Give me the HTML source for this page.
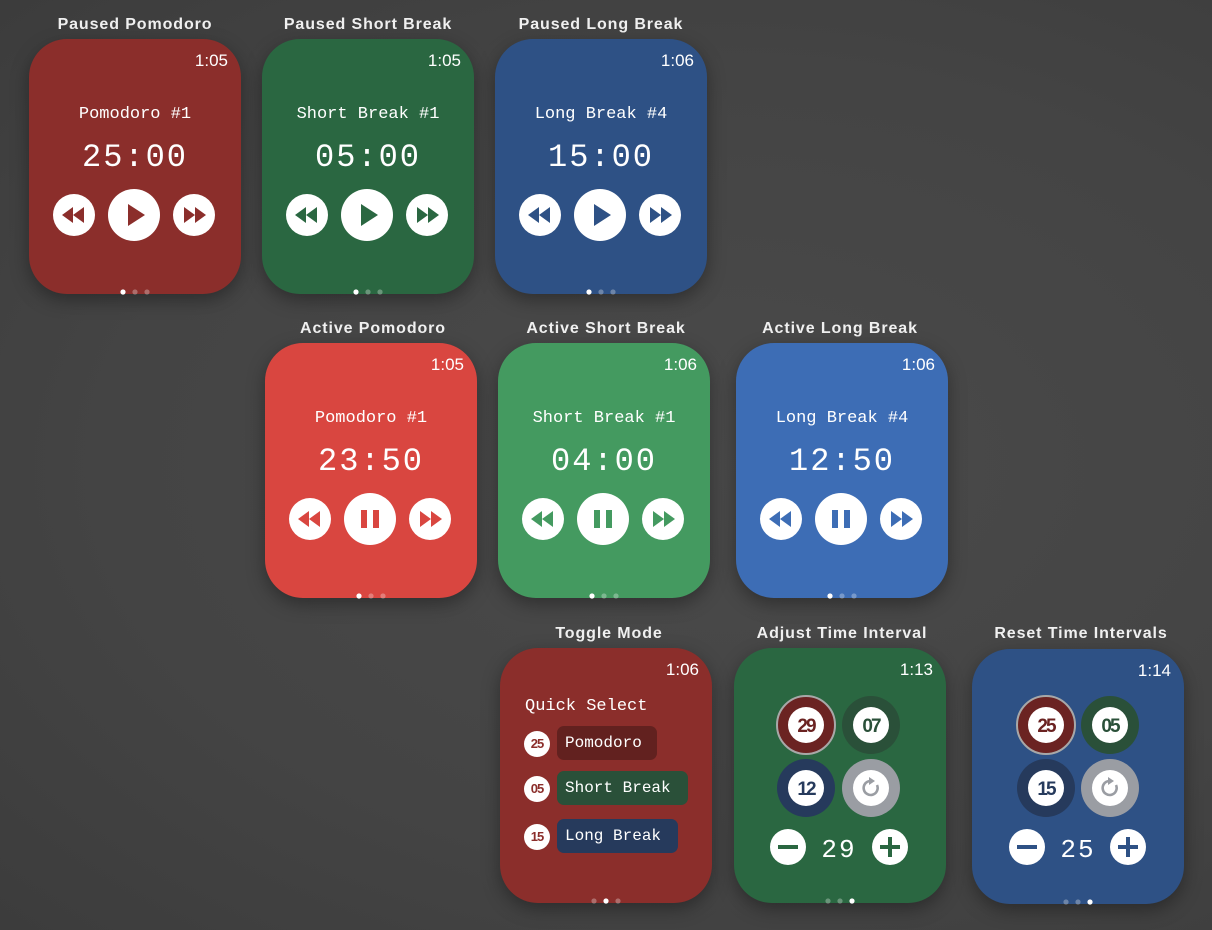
<!DOCTYPE html>
<html><head><meta charset="utf-8"><style>
*{margin:0;padding:0;box-sizing:border-box}
body{width:1212px;height:930px;background:radial-gradient(ellipse at 60% 50%,#4a4a4a 0%,#444 60%,#3c3c3c 100%);position:relative;overflow:hidden;font-family:"Liberation Sans",sans-serif}
.h{position:absolute;color:#f0f0f0;font-weight:bold;font-size:16px;text-align:center;width:240px;letter-spacing:0.9px}
.w{position:absolute;width:212px;height:255px;border-radius:38px;box-shadow:0 6px 18px rgba(0,0,0,.35)}
.t{position:absolute;right:13px;top:12px;color:#fff;font-size:17px}
.l{position:absolute;top:66px;width:100%;text-align:center;color:#fff;font-family:"Liberation Mono",monospace;font-size:17px}
.m{position:absolute;top:100px;width:100%;text-align:center;color:#fff;font-family:"Liberation Mono",monospace;font-size:32px;letter-spacing:2px}
.b{position:absolute;left:0;top:146px}
.d{position:absolute;left:0;bottom:-3px}
.qs{position:absolute;left:25px;top:49px;color:#fff;font-family:"Liberation Mono",monospace;font-size:17px}
.r{position:absolute;left:24px;height:34px}
.r .c{position:absolute;left:0;top:5px;width:26px;height:26px;border-radius:50%;background:#fff;color:#8b2e2b;font-weight:bold;font-size:13px;text-align:center;line-height:26px;letter-spacing:-1px}
.r .p{position:absolute;left:33px;top:0;height:34px;border-radius:7px;color:#fff;font-family:"Liberation Mono",monospace;font-size:16px;line-height:34px;padding:0 8px;white-space:nowrap}
</style></head><body>

<div class="h" style="left:15px;top:16px">Paused Pomodoro</div>
<div class="h" style="left:248px;top:16px">Paused Short Break</div>
<div class="h" style="left:481px;top:16px">Paused Long Break</div>
<div class="h" style="left:253px;top:320px">Active Pomodoro</div>
<div class="h" style="left:486px;top:320px">Active Short Break</div>
<div class="h" style="left:720px;top:320px">Active Long Break</div>
<div class="h" style="left:489px;top:625px">Toggle Mode</div>
<div class="h" style="left:722px;top:625px">Adjust Time Interval</div>
<div class="h" style="left:961px;top:625px">Reset Time Intervals</div>

<!-- Row 1 -->
<div class="w" style="left:29px;top:39px;background:#8b2e2b">
<div class="t">1:05</div><div class="l">Pomodoro #1</div><div class="m">25:00</div>
<svg class="b" width="212" height="60"><g fill="#fff"><circle cx="45" cy="30" r="21"/><circle cx="105" cy="30" r="26"/><circle cx="165" cy="30" r="21"/></g><g fill="#8b2e2b"><polygon points="33,30 44,22 44,38"/><polygon points="44,30 55,22 55,38"/><polygon points="99,19 116,30 99,41"/><polygon points="155,22 166,30 155,38"/><polygon points="166,22 177,30 166,38"/></g></svg>
<svg class="d" width="212" height="10"><circle cx="94" cy="5" r="2.6" fill="#fff"/><circle cx="106" cy="5" r="2.6" fill="rgba(255,255,255,.3)"/><circle cx="118" cy="5" r="2.6" fill="rgba(255,255,255,.3)"/></svg>
</div>

<div class="w" style="left:262px;top:39px;background:#2a6741">
<div class="t">1:05</div><div class="l">Short Break #1</div><div class="m">05:00</div>
<svg class="b" width="212" height="60"><g fill="#fff"><circle cx="45" cy="30" r="21"/><circle cx="105" cy="30" r="26"/><circle cx="165" cy="30" r="21"/></g><g fill="#2a6741"><polygon points="33,30 44,22 44,38"/><polygon points="44,30 55,22 55,38"/><polygon points="99,19 116,30 99,41"/><polygon points="155,22 166,30 155,38"/><polygon points="166,22 177,30 166,38"/></g></svg>
<svg class="d" width="212" height="10"><circle cx="94" cy="5" r="2.6" fill="#fff"/><circle cx="106" cy="5" r="2.6" fill="rgba(255,255,255,.3)"/><circle cx="118" cy="5" r="2.6" fill="rgba(255,255,255,.3)"/></svg>
</div>

<div class="w" style="left:495px;top:39px;background:#2e5185">
<div class="t">1:06</div><div class="l">Long Break #4</div><div class="m">15:00</div>
<svg class="b" width="212" height="60"><g fill="#fff"><circle cx="45" cy="30" r="21"/><circle cx="105" cy="30" r="26"/><circle cx="165" cy="30" r="21"/></g><g fill="#2e5185"><polygon points="33,30 44,22 44,38"/><polygon points="44,30 55,22 55,38"/><polygon points="99,19 116,30 99,41"/><polygon points="155,22 166,30 155,38"/><polygon points="166,22 177,30 166,38"/></g></svg>
<svg class="d" width="212" height="10"><circle cx="94" cy="5" r="2.6" fill="#fff"/><circle cx="106" cy="5" r="2.6" fill="rgba(255,255,255,.3)"/><circle cx="118" cy="5" r="2.6" fill="rgba(255,255,255,.3)"/></svg>
</div>

<!-- Row 2 -->
<div class="w" style="left:265px;top:343px;background:#d94640">
<div class="t">1:05</div><div class="l">Pomodoro #1</div><div class="m">23:50</div>
<svg class="b" width="212" height="60"><g fill="#fff"><circle cx="45" cy="30" r="21"/><circle cx="105" cy="30" r="26"/><circle cx="165" cy="30" r="21"/></g><g fill="#d94640"><polygon points="33,30 44,22 44,38"/><polygon points="44,30 55,22 55,38"/><rect x="96" y="21" width="6" height="18"/><rect x="108" y="21" width="6" height="18"/><polygon points="155,22 166,30 155,38"/><polygon points="166,22 177,30 166,38"/></g></svg>
<svg class="d" width="212" height="10"><circle cx="94" cy="5" r="2.6" fill="#fff"/><circle cx="106" cy="5" r="2.6" fill="rgba(255,255,255,.3)"/><circle cx="118" cy="5" r="2.6" fill="rgba(255,255,255,.3)"/></svg>
</div>

<div class="w" style="left:498px;top:343px;background:#449a60">
<div class="t">1:06</div><div class="l">Short Break #1</div><div class="m">04:00</div>
<svg class="b" width="212" height="60"><g fill="#fff"><circle cx="45" cy="30" r="21"/><circle cx="105" cy="30" r="26"/><circle cx="165" cy="30" r="21"/></g><g fill="#449a60"><polygon points="33,30 44,22 44,38"/><polygon points="44,30 55,22 55,38"/><rect x="96" y="21" width="6" height="18"/><rect x="108" y="21" width="6" height="18"/><polygon points="155,22 166,30 155,38"/><polygon points="166,22 177,30 166,38"/></g></svg>
<svg class="d" width="212" height="10"><circle cx="94" cy="5" r="2.6" fill="#fff"/><circle cx="106" cy="5" r="2.6" fill="rgba(255,255,255,.3)"/><circle cx="118" cy="5" r="2.6" fill="rgba(255,255,255,.3)"/></svg>
</div>

<div class="w" style="left:736px;top:343px;background:#3d6db5">
<div class="t">1:06</div><div class="l">Long Break #4</div><div class="m">12:50</div>
<svg class="b" width="212" height="60"><g fill="#fff"><circle cx="45" cy="30" r="21"/><circle cx="105" cy="30" r="26"/><circle cx="165" cy="30" r="21"/></g><g fill="#3d6db5"><polygon points="33,30 44,22 44,38"/><polygon points="44,30 55,22 55,38"/><rect x="96" y="21" width="6" height="18"/><rect x="108" y="21" width="6" height="18"/><polygon points="155,22 166,30 155,38"/><polygon points="166,22 177,30 166,38"/></g></svg>
<svg class="d" width="212" height="10"><circle cx="94" cy="5" r="2.6" fill="#fff"/><circle cx="106" cy="5" r="2.6" fill="rgba(255,255,255,.3)"/><circle cx="118" cy="5" r="2.6" fill="rgba(255,255,255,.3)"/></svg>
</div>

<!-- Row 3 -->
<div class="w" style="left:500px;top:648px;background:#8b2e2b">
<div class="t">1:06</div>
<div class="qs">Quick Select</div>
<div class="r" style="top:78px"><div class="c">25</div><div class="p" style="background:#62211f;width:100px">Pomodoro</div></div>
<div class="r" style="top:123px"><div class="c">05</div><div class="p" style="background:#2a5039;width:131px">Short Break</div></div>
<div class="r" style="top:171px"><div class="c">15</div><div class="p" style="background:#263a5c;width:121px">Long Break</div></div>
<svg class="d" width="212" height="10"><circle cx="94" cy="5" r="2.6" fill="rgba(255,255,255,.3)"/><circle cx="106" cy="5" r="2.6" fill="#fff"/><circle cx="118" cy="5" r="2.6" fill="rgba(255,255,255,.3)"/></svg>
</div>

<div class="w" style="left:734px;top:648px;background:#2a6741">
<div class="t">1:13</div>
<svg style="position:absolute;left:0;top:0" width="212" height="255" font-family="Liberation Sans" font-weight="bold">
<circle cx="72" cy="77" r="29" fill="#6b2322" stroke="#a8a8a8" stroke-width="2"/><circle cx="72" cy="77" r="18" fill="#fff"/><text x="72" y="84" font-size="19" text-anchor="middle" fill="#6b2322" letter-spacing="-2">29</text>
<circle cx="137" cy="77" r="29" fill="#2a5039"/><circle cx="137" cy="77" r="18" fill="#fff"/><text x="137" y="84" font-size="19" text-anchor="middle" fill="#2a5039" letter-spacing="-2">07</text>
<circle cx="72" cy="140" r="29" fill="#263a5c"/><circle cx="72" cy="140" r="18" fill="#fff"/><text x="72" y="147" font-size="19" text-anchor="middle" fill="#263a5c" letter-spacing="-2">12</text>
<circle cx="137" cy="140" r="29" fill="#9a9da3"/><circle cx="137" cy="140" r="18" fill="#fff"/><path d="M143 137 A7 7 0 1 1 136 133" fill="none" stroke="#9a9da3" stroke-width="2.6"/><polygon points="135,129 141,133 135,137" fill="#9a9da3"/>
<circle cx="54" cy="199" r="18" fill="#fff"/><rect x="44" y="197" width="20" height="4" fill="#2a6741"/>
<circle cx="156" cy="199" r="18" fill="#fff"/><rect x="146" y="197" width="20" height="4" fill="#2a6741"/><rect x="154" y="189" width="4" height="20" fill="#2a6741"/>
<text x="105" y="209" font-size="26" font-weight="normal" font-family="Liberation Mono" text-anchor="middle" fill="#fff" letter-spacing="2">29</text>
</svg>
<svg class="d" width="212" height="10"><circle cx="94" cy="5" r="2.6" fill="rgba(255,255,255,.3)"/><circle cx="106" cy="5" r="2.6" fill="rgba(255,255,255,.3)"/><circle cx="118" cy="5" r="2.6" fill="#fff"/></svg>
</div>

<div class="w" style="left:972px;top:649px;background:#2e5185">
<div class="t">1:14</div>
<svg style="position:absolute;left:0;top:0" width="212" height="255" font-family="Liberation Sans" font-weight="bold">
<circle cx="74" cy="76" r="29" fill="#6b2322" stroke="#a8a8a8" stroke-width="2"/><circle cx="74" cy="76" r="18" fill="#fff"/><text x="74" y="83" font-size="19" text-anchor="middle" fill="#6b2322" letter-spacing="-2">25</text>
<circle cx="138" cy="76" r="29" fill="#2a5039"/><circle cx="138" cy="76" r="18" fill="#fff"/><text x="138" y="83" font-size="19" text-anchor="middle" fill="#2a5039" letter-spacing="-2">05</text>
<circle cx="74" cy="139" r="29" fill="#263a5c"/><circle cx="74" cy="139" r="18" fill="#fff"/><text x="74" y="146" font-size="19" text-anchor="middle" fill="#263a5c" letter-spacing="-2">15</text>
<circle cx="138" cy="139" r="29" fill="#9a9da3"/><circle cx="138" cy="139" r="18" fill="#fff"/><path d="M144 136 A7 7 0 1 1 137 132" fill="none" stroke="#9a9da3" stroke-width="2.6"/><polygon points="136,128 142,132 136,136" fill="#9a9da3"/>
<circle cx="55" cy="198" r="18" fill="#fff"/><rect x="45" y="196" width="20" height="4" fill="#2e5185"/>
<circle cx="156" cy="198" r="18" fill="#fff"/><rect x="146" y="196" width="20" height="4" fill="#2e5185"/><rect x="154" y="188" width="4" height="20" fill="#2e5185"/>
<text x="106" y="208" font-size="26" font-weight="normal" font-family="Liberation Mono" text-anchor="middle" fill="#fff" letter-spacing="2">25</text>
</svg>
<svg class="d" width="212" height="10"><circle cx="94" cy="5" r="2.6" fill="rgba(255,255,255,.3)"/><circle cx="106" cy="5" r="2.6" fill="rgba(255,255,255,.3)"/><circle cx="118" cy="5" r="2.6" fill="#fff"/></svg>
</div>

</body></html>
